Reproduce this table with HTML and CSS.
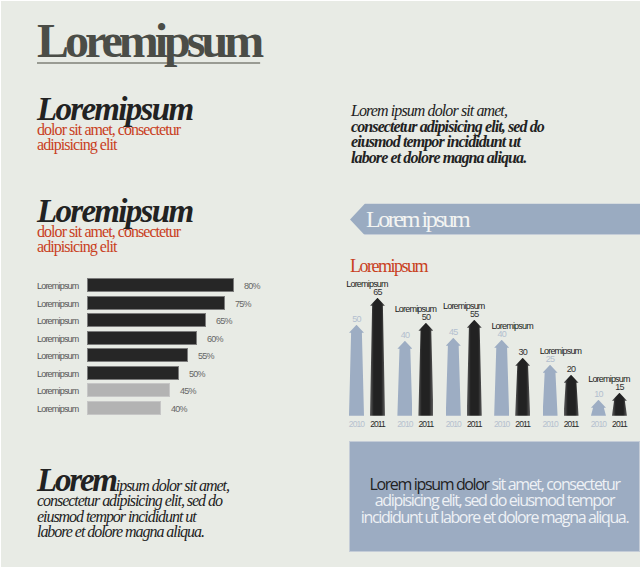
FILE: index.html
```html
<!DOCTYPE html>
<html lang="en">
<head>
<meta charset="utf-8">
<title>Loremipsum</title>
<link rel="stylesheet" href="styles.css">
</head>
<body>
<div class="page">
  <div class="col-left">
    <h1 class="title">Loremipsum</h1>
    <section class="block block-first">
      <h2 class="head">Loremipsum</h2>
      <p class="sub">dolor sit amet, consectetur<br>adipisicing elit</p>
    </section>
    <section class="block block-second">
      <h2 class="head">Loremipsum</h2>
      <p class="sub">dolor sit amet, consectetur<br>adipisicing elit</p>
    </section>
    <div class="bars">
      <div class="row"><span class="lbl">Loremipsum</span><span class="bar" style="width:147px"></span><span class="pct">80%</span></div>
      <div class="row"><span class="lbl">Loremipsum</span><span class="bar" style="width:138px"></span><span class="pct">75%</span></div>
      <div class="row"><span class="lbl">Loremipsum</span><span class="bar" style="width:119px"></span><span class="pct">65%</span></div>
      <div class="row"><span class="lbl">Loremipsum</span><span class="bar" style="width:110px"></span><span class="pct">60%</span></div>
      <div class="row"><span class="lbl">Loremipsum</span><span class="bar" style="width:101px"></span><span class="pct">55%</span></div>
      <div class="row"><span class="lbl">Loremipsum</span><span class="bar" style="width:92px"></span><span class="pct">50%</span></div>
      <div class="row"><span class="lbl">Loremipsum</span><span class="bar light" style="width:83px"></span><span class="pct">45%</span></div>
      <div class="row"><span class="lbl">Loremipsum</span><span class="bar light" style="width:74px"></span><span class="pct">40%</span></div>
    </div>
    <p class="quote"><span class="big">Lorem</span>ipsum dolor sit amet,<br>consectetur adipisicing elit, sed do<br>eiusmod tempor incididunt ut<br>labore et dolore magna aliqua.</p>
  </div>
  <div class="col-right">
    <p class="intro"><span class="it">Lorem ipsum dolor sit amet,</span><br><b>consectetur adipisicing elit, sed do<br>eiusmod tempor incididunt ut<br>labore et dolore magna aliqua.</b></p>
    <div class="banner">Lorem ipsum</div>
    <h3 class="chart-title">Loremipsum</h3>
    <div class="chart">
      <div class="group">
        <div class="gname">Loremipsum</div>
        <div class="pair">
          <div class="col"><span class="val v-blue">50</span><div class="arrow blue" style="height:91px"></div></div>
          <div class="col"><span class="val v-dark">65</span><div class="arrow dark" style="height:118px"></div></div>
        </div>
        <div class="years"><span class="y-blue">2010</span><span class="y-dark">2011</span></div>
      </div>
      <div class="group">
        <div class="gname">Loremipsum</div>
        <div class="pair">
          <div class="col"><span class="val v-blue">40</span><div class="arrow blue" style="height:75px"></div></div>
          <div class="col"><span class="val v-dark">50</span><div class="arrow dark" style="height:93px"></div></div>
        </div>
        <div class="years"><span class="y-blue">2010</span><span class="y-dark">2011</span></div>
      </div>
      <div class="group">
        <div class="gname">Loremipsum</div>
        <div class="pair">
          <div class="col"><span class="val v-blue">45</span><div class="arrow blue" style="height:78px"></div></div>
          <div class="col"><span class="val v-dark">55</span><div class="arrow dark" style="height:96px"></div></div>
        </div>
        <div class="years"><span class="y-blue">2010</span><span class="y-dark">2011</span></div>
      </div>
      <div class="group">
        <div class="gname">Loremipsum</div>
        <div class="pair">
          <div class="col"><span class="val v-blue">40</span><div class="arrow blue" style="height:76px"></div></div>
          <div class="col"><span class="val v-dark">30</span><div class="arrow dark" style="height:58px"></div></div>
        </div>
        <div class="years"><span class="y-blue">2010</span><span class="y-dark">2011</span></div>
      </div>
      <div class="group">
        <div class="gname">Loremipsum</div>
        <div class="pair">
          <div class="col"><span class="val v-blue">25</span><div class="arrow blue" style="height:51px"></div></div>
          <div class="col"><span class="val v-dark">20</span><div class="arrow dark" style="height:41px"></div></div>
        </div>
        <div class="years"><span class="y-blue">2010</span><span class="y-dark">2011</span></div>
      </div>
      <div class="group">
        <div class="gname">Loremipsum</div>
        <div class="pair">
          <div class="col"><span class="val v-blue">10</span><div class="arrow blue" style="height:16px"></div></div>
          <div class="col"><span class="val v-dark">15</span><div class="arrow dark" style="height:23px"></div></div>
        </div>
        <div class="years"><span class="y-blue">2010</span><span class="y-dark">2011</span></div>
      </div>
    </div>
    <div class="box">
      <p><span class="dk">Lorem ipsum dolor</span> sit amet, consectetur<br>adipisicing elit, sed do eiusmod tempor<br>incididunt ut labore et dolore magna aliqua.</p>
    </div>
  </div>
</div>
</body>
</html>
```

FILE: styles.css
```css
body {
  margin: 0;
}

.page {
  width: 640px;
  height: 567px;
  box-sizing: border-box;
  border-top: 1px solid #ffffff;
  border-left: 1px solid #ffffff;
  background: #e8ebe5;
  display: grid;
  grid-template-columns: 348px 291px;
  overflow: hidden;
  font-family: "Liberation Serif", serif;
}

/* ---------- left column ---------- */
.col-left {
  padding-left: 36px;
  display: flex;
  flex-direction: column;
  align-items: flex-start;
}

.title {
  margin: 16px 0 0;
  font-size: 48px;
  line-height: 48px;
  font-weight: bold;
  color: #4b4d47;
  letter-spacing: -4px;
  text-decoration: underline;
  text-decoration-color: #999b93;
  text-decoration-thickness: 2px;
  text-underline-offset: 5px;
  text-decoration-skip-ink: none;
}

.block-first {
  margin-top: 30px;
}

.block-second {
  margin-top: 45px;
}

.head {
  margin: 0;
  font-size: 33px;
  line-height: 28px;
  font-style: italic;
  font-weight: bold;
  color: #222222;
  letter-spacing: -1.7px;
}

.sub {
  margin: -1px 0 0;
  font-size: 16px;
  line-height: 15px;
  color: #c9401d;
  letter-spacing: -0.95px;
}

.bars {
  margin-top: 24px;
  display: flex;
  flex-direction: column;
  gap: 3.5px;
}

.row {
  display: flex;
  align-items: center;
  height: 14px;
}

.lbl,
.pct {
  font-family: "Liberation Sans", sans-serif;
  font-size: 9px;
  letter-spacing: -0.8px;
  padding-top: 2px;
  white-space: nowrap;
}

.lbl {
  width: 50px;
  color: #555555;
}

.pct {
  margin-left: 10px;
  color: #666666;
}

.bar {
  height: 14px;
  box-sizing: border-box;
  border: 1px solid #7b7b7b;
  background: #262626;
}

.bar.light {
  background: #b3b3b3;
  border-color: #c6c6c6;
}

.quote {
  margin: 63px 0 0;
  font-size: 16px;
  line-height: 15.5px;
  font-style: italic;
  color: #222222;
  letter-spacing: -1.05px;
  white-space: nowrap;
}

.big {
  font-size: 33px;
  font-weight: bold;
  line-height: 0;
  letter-spacing: -2.2px;
}

/* ---------- right column ---------- */
.col-right {
  display: flex;
  flex-direction: column;
  align-items: stretch;
}

.intro {
  margin: 102px 0 0 2px;
  font-size: 16px;
  line-height: 15.6px;
  font-style: italic;
  color: #222222;
  letter-spacing: -0.9px;
  white-space: nowrap;
}

.intro b {
  font-weight: bold;
}

.banner {
  margin: 38px 0 0 1px;
  height: 32px;
  padding-left: 16px;
  background: linear-gradient(#c5cdd8 0 1px, #9aabc1 1px calc(100% - 1px), #c5cdd8 calc(100% - 1px));
  clip-path: polygon(15px 0, 100% 0, 100% 100%, 15px 100%, 0 50%);
  font-size: 24px;
  line-height: 32px;
  color: #f3f4f2;
  letter-spacing: -2.4px;
}

.chart-title {
  margin: 21px 0 0 1px;
  font-size: 18px;
  line-height: 20px;
  font-weight: normal;
  color: #c9401d;
  letter-spacing: -1.5px;
}

.chart {
  margin-top: 4px;
  display: flex;
  align-items: flex-end;
  gap: 12.4px;
}

.group {
  width: 36px;
  display: flex;
  flex-direction: column;
  align-items: center;
  font-family: "Liberation Sans", sans-serif;
}

.gname {
  font-size: 9px;
  line-height: 8px;
  letter-spacing: -0.8px;
  color: #222222;
  white-space: nowrap;
}

.pair {
  display: flex;
  align-items: flex-end;
  gap: 6px;
}

.col {
  width: 15px;
  display: flex;
  flex-direction: column;
  align-items: center;
}

.val {
  font-size: 9px;
  line-height: 8px;
  letter-spacing: -0.8px;
  margin-bottom: 1.3px;
  white-space: nowrap;
}

.v-blue {
  color: #b3bfcf;
}

.v-dark {
  color: #333333;
}

.arrow {
  width: 15px;
  clip-path: polygon(50% 0, 100% 8px, 86% 8px, 100% 100%, 0 100%, 14% 8px, 0 8px);
}

.arrow.blue {
  background: #9dadc3;
}

.arrow.dark {
  background: linear-gradient(90deg, #5e5e5e 0%, #222222 25%, #222222 75%, #5e5e5e 100%);
}

.years {
  margin-top: 3.7px;
  display: flex;
  gap: 6px;
  font-size: 8.5px;
  line-height: 10px;
  letter-spacing: -0.9px;
}

.years span {
  width: 15px;
  display: flex;
  justify-content: center;
  white-space: nowrap;
}

.y-blue {
  color: #b6c1cf;
}

.y-dark {
  color: #2a2a2a;
}

.box {
  margin-top: 12px;
  height: 111px;
  box-sizing: border-box;
  border: 1px solid #c4ccd7;
  background: #9cacc2;
  display: flex;
  align-items: center;
  justify-content: center;
  padding-top: 7px;
}

.box p {
  margin: 0;
  font-family: "Open Sans", sans-serif;
  font-size: 16px;
  line-height: 16.3px;
  letter-spacing: -1.35px;
  text-align: center;
  color: #eef1f5;
  white-space: nowrap;
}

.box .dk {
  color: #222222;
}
```
